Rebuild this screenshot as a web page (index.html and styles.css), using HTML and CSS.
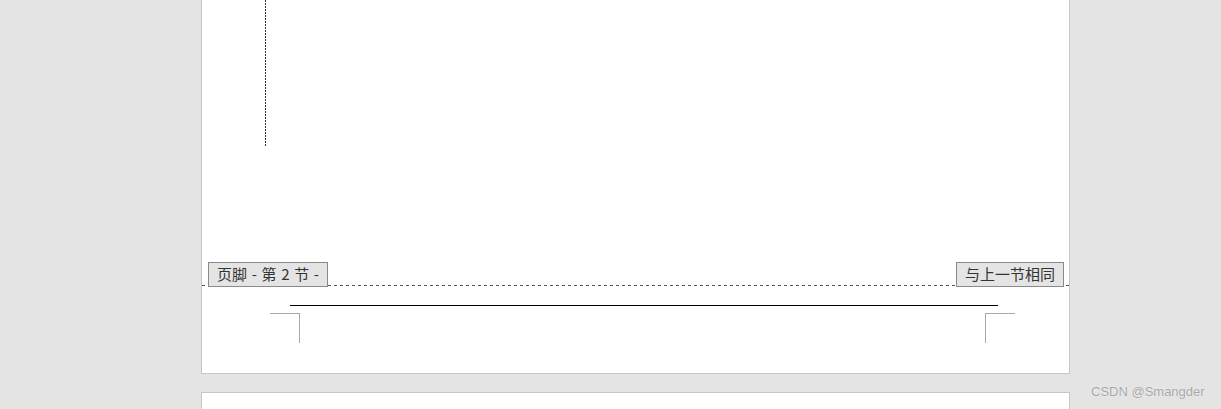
FILE: index.html
```html
<!DOCTYPE html>
<html lang="zh">
<head>
<meta charset="utf-8">
<title>页脚</title>
<link rel="stylesheet" href="styles.css">
</head>
<body>
<div class="page page-one">
  <div class="header-mark"></div>
  <div class="footer-tabs">
    <span class="tab tab-section">页脚 - 第 2 节 -</span>
    <span class="tab">与上一节相同</span>
  </div>
  <div class="footer-rule"></div>
  <div class="corners">
    <div class="corner corner-left"></div>
    <div class="corner corner-right"></div>
  </div>
</div>
<div class="page page-two"></div>
<div class="watermark">CSDN @Smangder</div>
</body>
</html>
```

FILE: styles.css
```css
html, body {
  margin: 0;
  padding: 0;
  height: 100%;
  overflow: hidden;
}
body {
  background: #e4e4e4;
  font-family: "Noto Sans CJK SC", "Liberation Sans", sans-serif;
  position: relative;
}
.page {
  box-sizing: border-box;
  width: 869px;
  margin-left: 201px;
  background: #ffffff;
  border: 1px solid #c6c6c6;
}
.page-one {
  border-top: none;
  height: 374px;
  display: flex;
  flex-direction: column;
}
.page-two {
  margin-top: 18px;
  height: 17px;
  border-bottom: none;
}
.header-mark {
  width: 1px;
  height: 147px;
  margin-left: 63px;
  background: repeating-linear-gradient(to bottom, #333333 0 2px, transparent 2px 3px);
}
.footer-tabs {
  margin-top: 115px;
  display: flex;
  justify-content: space-between;
  align-items: flex-end;
  padding: 0 5px 0 6px;
  height: 24px;
  background: repeating-linear-gradient(to right, #555555 0 3px, transparent 3px 6px) left bottom / 100% 1px no-repeat;
}
.tab {
  box-sizing: border-box;
  height: 25px;
  margin-bottom: -1px;
  padding: 0 8px;
  border: 1px solid #8a8a8a;
  background: #e4e4e4;
  color: #333333;
  font-size: 15px;
  line-height: 22px;
  white-space: nowrap;
}
.tab-section {
  word-spacing: 1.3px;
}
.footer-rule {
  margin-top: 19px;
  margin-left: 88px;
  width: 708px;
  height: 1px;
  background: #000000;
}
.corners {
  margin-top: 7px;
  display: flex;
}
.corner {
  width: 29px;
  height: 29px;
  border-top: 1px solid #a8a8a8;
}
.corner-left {
  margin-left: 68px;
  border-right: 1px solid #a8a8a8;
}
.corner-right {
  margin-left: 685px;
  border-left: 1px solid #a8a8a8;
}
.watermark {
  position: absolute;
  left: 1091px;
  top: 384px;
  font-family: "Liberation Sans", "Noto Sans", sans-serif;
  font-size: 13px;
  color: #a6a6a6;
  text-shadow: 0 0 1px #ffffff;
  white-space: nowrap;
}
```
